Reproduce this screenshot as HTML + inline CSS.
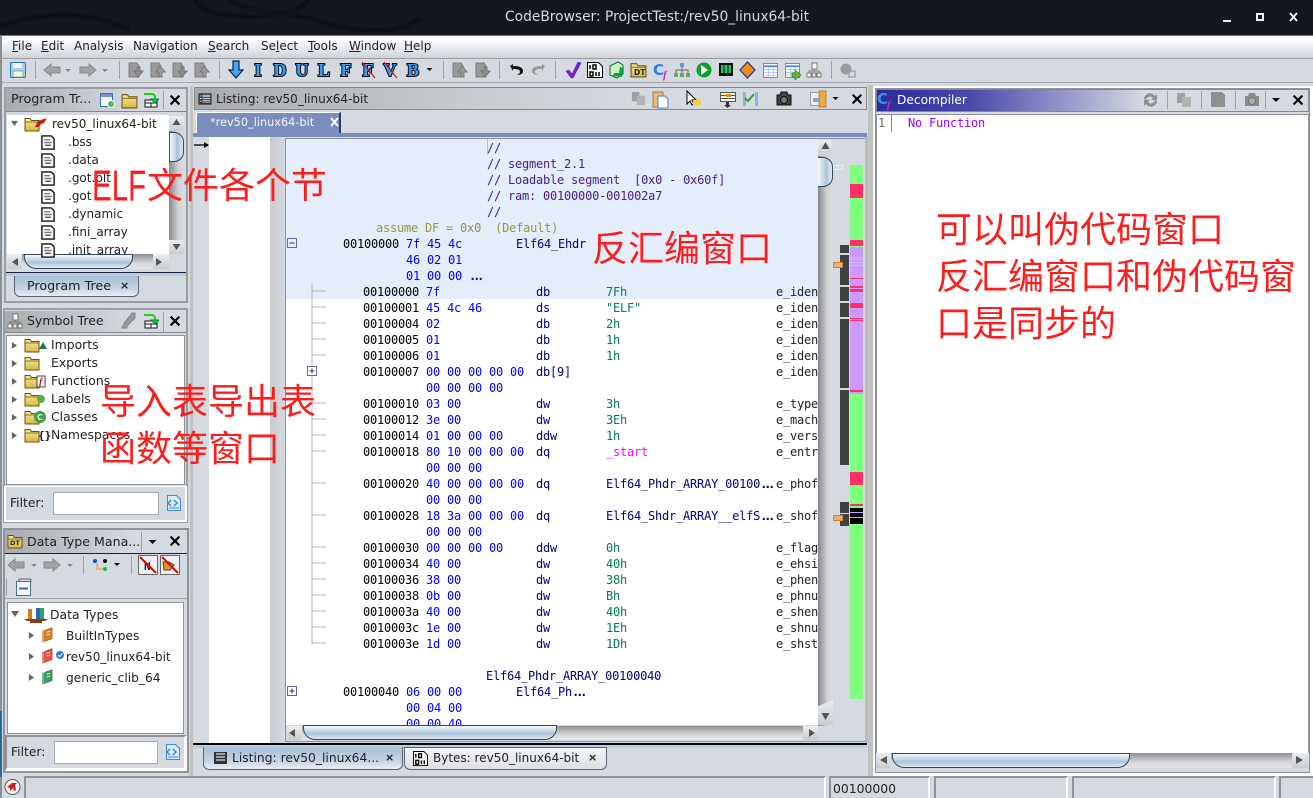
<!DOCTYPE html>
<html><head><meta charset="utf-8"><style>
html,body{margin:0;padding:0;width:1313px;height:798px;overflow:hidden;background:#d5d9e0}
body{position:relative;font-family:"DejaVu Sans","Liberation Sans",sans-serif;font-size:12px;color:#222}
.a{position:absolute;box-sizing:border-box}
.t{position:absolute;white-space:pre;line-height:16px;height:16px;margin-top:2px}
.w{background:#fff}
.box{position:absolute;box-sizing:border-box;border:2px solid #9a9da3}
.sep{position:absolute;width:1px;background:#9da0a6}
u{text-decoration:underline}
.note{position:absolute;white-space:pre;font-family:"Liberation Sans","Noto Sans CJK SC",sans-serif;font-size:36px;line-height:46px;height:46px;color:#ff1c1c;z-index:20}
#L{position:absolute;left:286px;top:139px;width:532px;height:586px;overflow:hidden;background:#fff;font-family:"DejaVu Sans Mono","Liberation Mono",monospace;font-size:12px;letter-spacing:-.22px;color:#000}
#L div{position:absolute;left:0;width:532px;height:16px;line-height:16px;white-space:pre}
#L span{position:absolute;top:1px}
#L b{letter-spacing:-3.2px}
.ad{left:57px}.ad2{left:77px}
.b1{left:120px;color:#0000ff}.b2{left:140px;color:#0000ff}
.m1{left:230px;color:#000080}.m2{left:250px;color:#000080}
.o{left:320px;color:#00804a}.ol{left:320px;color:#000080}
.c{left:490px;color:#222}
.cm{left:201px;color:#4b1a8c}
.thumb{position:absolute;box-sizing:border-box;border:1px solid #33495e;background:linear-gradient(#f4f8fb,#bcd2e2 45%,#a9c3d8 55%,#dfeaf2)}
.vthumb{position:absolute;box-sizing:border-box;border:1px solid #33495e;background:linear-gradient(90deg,#f4f8fb,#bcd2e2 45%,#a9c3d8 55%,#dfeaf2)}
.track{position:absolute;background:linear-gradient(#8d8f93,#d5d6d8 60%,#e4e5e7)}
.vtrack{position:absolute;background:linear-gradient(90deg,#85878b,#d0d1d3 60%,#dcdde0)}
.btn{position:absolute;background:linear-gradient(#eceef0,#c9ccd0);text-align:center}
.tab{position:absolute;box-sizing:border-box;border:1px solid #5a6470;border-top:0;border-radius:0 0 6px 6px}
.ltr{position:absolute;font:bold 18px/17px "Liberation Serif",serif;color:#3b9bf0;-webkit-text-stroke:2px #0a0a14;paint-order:stroke fill;width:18px;text-align:center}
.elf{display:inline-block;width:55px;transform-origin:0 50%;transform:scale(.82,1.2)}
svg{position:absolute;left:0;top:0;overflow:visible}
</style></head><body>

<!-- title bar -->
<div class="a" style="left:0;top:0;width:1313px;height:36px;background:#15171e;border-bottom:1px solid #3b82c8"></div>
<svg width="1313" height="36" style="z-index:1"><g fill="none" stroke="#101118" stroke-width="5"><path d="M195 0C205 22 290 22 310 0M230 0C250 14 300 12 330 24 370 36 410 30 420 18"/><path d="M0 26C40 12 90 10 130 30"/></g></svg>
<div class="t" style="left:505px;top:7px;z-index:2;color:#d8d9db;font-size:13.8px;font-weight:500">CodeBrowser: ProjectTest:/rev50_linux64-bit</div>
<div class="a" style="left:1223px;top:20px;width:8px;height:2px;background:#eee;z-index:2"></div>
<div class="a" style="left:1256px;top:13px;width:8px;height:8px;border:2px solid #eee;z-index:2"></div>
<svg width="1313" height="36" style="z-index:2"><path d="M1290 13l7 8M1297 13l-7 8" stroke="#eee" stroke-width="2"/></svg>

<!-- menu -->
<div class="a" style="left:2px;top:36px;width:1311px;height:23px;background:linear-gradient(#fff 15%,#eceef1 45%,#cfd2d8);border-bottom:1px solid #9a9da3"></div>
<div class="t" style="left:12px;top:36px"><u>F</u>ile</div>
<div class="t" style="left:41px;top:36px"><u>E</u>dit</div>
<div class="t" style="left:74px;top:36px">Analysis</div>
<div class="t" style="left:133px;top:36px">Navigation</div>
<div class="t" style="left:208px;top:36px"><u>S</u>earch</div>
<div class="t" style="left:261px;top:36px">Se<u>l</u>ect</div>
<div class="t" style="left:308px;top:36px"><u>T</u>ools</div>
<div class="t" style="left:349px;top:36px"><u>W</u>indow</div>
<div class="t" style="left:404px;top:36px"><u>H</u>elp</div>

<!-- toolbar separator lines -->
<div class="a" style="left:0;top:82px;width:1313px;height:1px;background:#a5a8ae"></div>
<div class="sep" style="left:35px;top:61px;height:18px"></div>
<div class="sep" style="left:119px;top:61px;height:18px"></div>
<div class="sep" style="left:219px;top:61px;height:18px"></div>
<div class="sep" style="left:443px;top:61px;height:18px"></div>
<div class="sep" style="left:499px;top:61px;height:18px"></div>
<div class="sep" style="left:555px;top:61px;height:18px"></div>
<div class="sep" style="left:831px;top:61px;height:18px"></div>

<div class="ltr" style="left:249px;top:62px">I</div>
<div class="ltr" style="left:271px;top:62px">D</div>
<div class="ltr" style="left:293px;top:62px">U</div>
<div class="ltr" style="left:315px;top:62px">L</div>
<div class="ltr" style="left:337px;top:62px">F</div>
<div class="ltr" style="left:359px;top:62px">F</div>
<div class="ltr" style="left:381px;top:62px">V</div>
<div class="ltr" style="left:404px;top:62px">B</div>

<!-- program tree panel -->
<div class="box" style="left:4px;top:87px;width:184px;height:216px"></div>
<div class="a" style="left:6px;top:89px;width:180px;height:23px;background:linear-gradient(90deg,#a9abae,#d5d9e0 70%);border-bottom:1px solid #888"></div>
<div class="t" style="left:11px;top:90px;font-size:12.8px">Program Tr...</div>
<div class="sep" style="left:163px;top:91px;height:18px"></div>
<div class="a w" style="left:7px;top:115px;width:162px;height:139px;overflow:hidden" id="pt">
<div class="t" style="left:45px;top:-1px">rev50_linux64-bit</div>
<div class="t" style="left:61px;top:17px">.bss</div>
<div class="t" style="left:61px;top:35px">.data</div>
<div class="t" style="left:61px;top:53px">.got.plt</div>
<div class="t" style="left:61px;top:71px">.got</div>
<div class="t" style="left:61px;top:89px">.dynamic</div>
<div class="t" style="left:61px;top:107px">.fini_array</div>
<div class="t" style="left:61px;top:125px">.init_array</div>
</div>
<div class="a" style="left:169px;top:116px;width:15px;height:138px;background:#d5d9e0"></div>
<div class="vtrack" style="left:169px;top:131px;width:15px;height:109px"></div>
<div class="btn" style="left:169px;top:116px;width:15px;height:15px"></div>
<div class="btn" style="left:169px;top:240px;width:15px;height:14px"></div>
<div class="vthumb" style="left:169px;top:132px;width:15px;height:30px;border-radius:0 10px 10px 0"></div>
<div class="track" style="left:7px;top:254px;width:162px;height:15px"></div>
<div class="btn" style="left:7px;top:254px;width:15px;height:15px"></div>
<div class="btn" style="left:153px;top:254px;width:16px;height:15px"></div>
<div class="thumb" style="left:24px;top:254px;width:109px;height:15px;border-radius:0 0 12px 12px"></div>
<div class="a" style="left:6px;top:272px;width:180px;height:1px;background:#1a1f3c"></div>
<div class="a" style="left:6px;top:273px;width:180px;height:3px;background:#b9cde0"></div>
<div class="tab" style="left:14px;top:276px;width:125px;height:21px;background:linear-gradient(#a9c0d6,#c2d2e0 60%,#e8eef3)"></div>
<div class="t" style="left:27px;top:276px;font-size:12.7px">Program Tree</div>
<div class="t" style="left:120px;top:276px;font-size:11px;font-weight:bold">×</div>

<!-- symbol tree -->
<div class="box" style="left:3px;top:308px;width:185px;height:215px"></div>
<div class="a" style="left:5px;top:311px;width:181px;height:22px;background:linear-gradient(90deg,#a9abae,#d5d9e0 70%);border-bottom:1px solid #888"></div>
<div class="t" style="left:27px;top:311px;font-size:12.5px">Symbol Tree</div>
<div class="sep" style="left:163px;top:312px;height:20px"></div>
<div class="a w" style="left:6px;top:335px;width:179px;height:150px;border:1px solid #8f9298"></div>
<div class="t" style="left:51px;top:335px;font-size:12.4px">Imports</div>
<div class="t" style="left:51px;top:353px;font-size:12.4px">Exports</div>
<div class="t" style="left:51px;top:371px;font-size:12.4px">Functions</div>
<div class="t" style="left:51px;top:389px;font-size:12.4px">Labels</div>
<div class="t" style="left:51px;top:407px;font-size:12.4px">Classes</div>
<div class="t" style="left:51px;top:425px;font-size:12.4px">Namespaces</div>
<div class="a" style="left:4px;top:486px;width:183px;height:36px;border:2px solid #fff;border-top:1px solid #fff;background:#d5d9e0"></div>
<div class="t" style="left:10px;top:493px;font-size:12.3px">Filter:</div>
<div class="a w" style="left:53px;top:492px;width:106px;height:23px;border:1px solid #a8abb0"></div>

<!-- data type manager -->
<div class="box" style="left:3px;top:528px;width:186px;height:245px;border-color:#8f9298"></div>
<div class="a" style="left:5px;top:530px;width:182px;height:24px;background:linear-gradient(90deg,#a9abae,#d5d9e0 70%);border-bottom:1px solid #222"></div>
<div class="t" style="left:27px;top:532px;font-size:12.6px">Data Type Mana...</div>
<div class="sep" style="left:141px;top:532px;height:20px"></div>
<div class="sep" style="left:83px;top:556px;height:18px"></div>
<div class="sep" style="left:131px;top:556px;height:18px"></div>
<div class="sep" style="left:6px;top:578px;height:18px"></div>
<div class="a" style="left:5px;top:598px;width:182px;height:1px;background:#a5a8ae"></div>
<div class="a w" style="left:7px;top:602px;width:177px;height:132px;border:1px solid #8f9298"></div>
<div class="t" style="left:50px;top:605px;font-size:12.4px">Data Types</div>
<div class="t" style="left:66px;top:626px;font-size:12.2px">BuiltInTypes</div>
<div class="t" style="left:66px;top:647px">rev50_linux64-bit</div>
<div class="t" style="left:66px;top:668px;font-size:12.2px">generic_clib_64</div>
<div class="a" style="left:5px;top:735px;width:182px;height:36px;border:2px solid #8f9298;border-bottom:3px solid #fff;border-right:3px solid #fff;background:#d5d9e0"></div>
<div class="t" style="left:11px;top:742px;font-size:12.3px">Filter:</div>
<div class="a w" style="left:54px;top:741px;width:104px;height:23px;border:1px solid #a8abb0"></div>

<!-- splitter -->
<div class="a" style="left:190px;top:86px;width:3px;height:692px;background:#c1c2c0"></div>
<div class="a" style="left:279px;top:430px;width:4px;height:18px;background:#b5b8bd;border:1px solid #999"></div>

<!-- listing panel -->
<div class="a" style="left:194px;top:87px;width:673px;height:23px;background:linear-gradient(90deg,#a8aaae,#c8cace 40%,#d5d9e0 65%);border:1px solid #888"></div>
<div class="t" style="left:216px;top:89px">Listing: rev50_linux64-bit</div>
<div class="a" style="left:196px;top:112px;width:145px;height:22px;background:#7a8dbd;border-top:1px solid #fff;border-right:2px solid #2c3a66;border-left:1px solid #fff"></div>
<div class="t" style="left:210px;top:113px;color:#f4f6fb;font-size:11.3px">*rev50_linux64-bit</div>
<div class="a" style="left:193px;top:133px;width:674px;height:4px;background:#7a8dbd"></div>
<div class="a" style="left:193px;top:137px;width:16px;height:606px;background:#d5d9e0"></div>
<div class="a w" style="left:209px;top:137px;width:61px;height:606px"></div>
<div class="a" style="left:270px;top:137px;width:15px;height:606px;background:linear-gradient(90deg,#c8cacc,#d5d9e0)"></div>
<div class="a" style="left:285px;top:138px;width:582px;height:604px;border:1px solid #8f9298"></div>

<div id="L">
<div style="top:0;height:160px;background:#e4eefb"></div>
<div style="top:0"><span class="cm">//</span></div>
<div style="top:16px"><span class="cm">// segment_2.1</span></div>
<div style="top:32px"><span class="cm">// Loadable segment  [0x0 - 0x60f]</span></div>
<div style="top:48px"><span class="cm">// ram: 00100000-001002a7</span></div>
<div style="top:64px"><span class="cm">//</span></div>
<div style="top:80px"><span style="left:90px;color:#9a9440">assume DF = 0x0  (Default)</span></div>
<div style="top:96px"><span class="ad">00100000</span><span class="b1">7f 45 4c</span><span class="m1">Elf64_Ehdr</span></div>
<div style="top:112px"><span class="b1">46 02 01</span></div>
<div style="top:128px"><span class="b1">01 00 00 <b>...</b></span></div>
<div style="top:144px"><span class="ad2">00100000</span><span class="b2">7f</span><span class="m2">db</span><span class="o">7Fh</span><span class="c">e_iden</span></div>
<div style="top:160px"><span class="ad2">00100001</span><span class="b2">45 4c 46</span><span class="m2">ds</span><span class="o">"ELF"</span><span class="c">e_iden</span></div>
<div style="top:176px"><span class="ad2">00100004</span><span class="b2">02</span><span class="m2">db</span><span class="o">2h</span><span class="c">e_iden</span></div>
<div style="top:192px"><span class="ad2">00100005</span><span class="b2">01</span><span class="m2">db</span><span class="o">1h</span><span class="c">e_iden</span></div>
<div style="top:208px"><span class="ad2">00100006</span><span class="b2">01</span><span class="m2">db</span><span class="o">1h</span><span class="c">e_iden</span></div>
<div style="top:224px"><span class="ad2">00100007</span><span class="b2">00 00 00 00 00</span><span class="m2">db[9]</span><span class="c">e_iden</span></div>
<div style="top:240px"><span class="b2">00 00 00 00</span></div>
<div style="top:256px"><span class="ad2">00100010</span><span class="b2">03 00</span><span class="m2">dw</span><span class="o">3h</span><span class="c">e_type</span></div>
<div style="top:272px"><span class="ad2">00100012</span><span class="b2">3e 00</span><span class="m2">dw</span><span class="o">3Eh</span><span class="c">e_mach</span></div>
<div style="top:288px"><span class="ad2">00100014</span><span class="b2">01 00 00 00</span><span class="m2">ddw</span><span class="o">1h</span><span class="c">e_vers</span></div>
<div style="top:304px"><span class="ad2">00100018</span><span class="b2">80 10 00 00 00</span><span class="m2">dq</span><span class="ol" style="color:#ff00ff">_start</span><span class="c">e_entr</span></div>
<div style="top:320px"><span class="b2">00 00 00</span></div>
<div style="top:336px"><span class="ad2">00100020</span><span class="b2">40 00 00 00 00</span><span class="m2">dq</span><span class="ol">Elf64_Phdr_ARRAY_00100<b>...</b></span><span class="c">e_phof</span></div>
<div style="top:352px"><span class="b2">00 00 00</span></div>
<div style="top:368px"><span class="ad2">00100028</span><span class="b2">18 3a 00 00 00</span><span class="m2">dq</span><span class="ol">Elf64_Shdr_ARRAY__elfS<b>...</b></span><span class="c">e_shof</span></div>
<div style="top:384px"><span class="b2">00 00 00</span></div>
<div style="top:400px"><span class="ad2">00100030</span><span class="b2">00 00 00 00</span><span class="m2">ddw</span><span class="o">0h</span><span class="c">e_flag</span></div>
<div style="top:416px"><span class="ad2">00100034</span><span class="b2">40 00</span><span class="m2">dw</span><span class="o">40h</span><span class="c">e_ehsi</span></div>
<div style="top:432px"><span class="ad2">00100036</span><span class="b2">38 00</span><span class="m2">dw</span><span class="o">38h</span><span class="c">e_phen</span></div>
<div style="top:448px"><span class="ad2">00100038</span><span class="b2">0b 00</span><span class="m2">dw</span><span class="o">Bh</span><span class="c">e_phnu</span></div>
<div style="top:464px"><span class="ad2">0010003a</span><span class="b2">40 00</span><span class="m2">dw</span><span class="o">40h</span><span class="c">e_shen</span></div>
<div style="top:480px"><span class="ad2">0010003c</span><span class="b2">1e 00</span><span class="m2">dw</span><span class="o">1Eh</span><span class="c">e_shnu</span></div>
<div style="top:496px"><span class="ad2">0010003e</span><span class="b2">1d 00</span><span class="m2">dw</span><span class="o">1Dh</span><span class="c">e_shst</span></div>
<div style="top:528px"><span style="left:200px;color:#000080">Elf64_Phdr_ARRAY_00100040</span></div>
<div style="top:544px"><span class="ad">00100040</span><span class="b1">06 00 00</span><span class="m1">Elf64_Ph<b>...</b></span></div>
<div style="top:560px"><span class="b1">00 04 00</span></div>
<div style="top:576px"><span class="b1">00 00 40</span></div>
</div>

<!-- listing v scrollbar -->
<div class="vtrack" style="left:818px;top:140px;width:15px;height:586px"></div>
<div class="btn" style="left:818px;top:140px;width:14px;height:16px"></div>
<div class="vthumb" style="left:818px;top:157px;width:15px;height:30px;border-radius:0 10px 10px 0;border-left:0"></div>
<div class="btn" style="left:818px;top:700px;width:15px;height:25px;clip-path:polygon(0 25%,100% 0,100% 100%,0 100%)"></div>
<div class="a" style="left:833px;top:165px;width:10px;height:1px;background:#fff"></div>
<div class="a" style="left:833px;top:165px;width:10px;height:5px;border:1px solid #eef0f3"></div>

<!-- overview bars -->
<div class="a" style="left:840px;top:245px;width:9px;height:8px;background:#404040"></div>
<div class="a" style="left:840px;top:255px;width:9px;height:30px;background:#404040"></div>
<div class="a" style="left:840px;top:287px;width:9px;height:14px;background:#404040"></div>
<div class="a" style="left:840px;top:303px;width:9px;height:14px;background:#404040"></div>
<div class="a" style="left:840px;top:319px;width:9px;height:69px;background:#404040"></div>
<div class="a" style="left:840px;top:390px;width:9px;height:75px;background:#404040"></div>
<div class="a" style="left:840px;top:502px;width:9px;height:11px;background:#404040"></div>
<div class="a" style="left:840px;top:514px;width:9px;height:12px;background:#404040"></div>
<div class="a" style="left:833px;top:262px;width:10px;height:6px;background:#d8b48a;border:1px solid #f07f10"></div>
<div class="a" style="left:833px;top:515px;width:10px;height:6px;background:#d8b48a;border:1px solid #f07f10"></div>
<div class="a" style="left:850px;top:165px;width:13px;height:534px;background:#80ff80"></div>
<div class="a" style="left:850px;top:184px;width:13px;height:14px;background:#ff3068"></div>
<div class="a" style="left:850px;top:240px;width:13px;height:6px;background:#ff3068"></div>
<div class="a" style="left:850px;top:247px;width:13px;height:147px;background:#cc99ff"></div>
<div class="a" style="left:850px;top:257px;width:13px;height:1px;background:#c4c0ff"></div>
<div class="a" style="left:850px;top:259px;width:13px;height:1px;background:#c4c0ff"></div>
<div class="a" style="left:850px;top:262px;width:13px;height:1px;background:#c4c0ff"></div>
<div class="a" style="left:850px;top:265px;width:13px;height:1px;background:#c4c0ff"></div>
<div class="a" style="left:850px;top:278px;width:13px;height:1px;background:#ff3068"></div>
<div class="a" style="left:850px;top:286px;width:13px;height:2px;background:#ff3068"></div>
<div class="a" style="left:850px;top:289px;width:13px;height:3px;background:#ff3068"></div>
<div class="a" style="left:850px;top:303px;width:13px;height:5px;background:#ff3068"></div>
<div class="a" style="left:850px;top:318px;width:13px;height:1px;background:#ff3068"></div>
<div class="a" style="left:850px;top:320px;width:13px;height:1px;background:#ff3068"></div>
<div class="a" style="left:850px;top:390px;width:13px;height:2px;background:#ff3068"></div>
<div class="a" style="left:850px;top:472px;width:13px;height:13px;background:#ff3068"></div>
<div class="a" style="left:850px;top:504px;width:13px;height:2px;background:#ff3068"></div>
<div class="a" style="left:850px;top:508px;width:13px;height:16px;background:#000"></div>
<div class="a" style="left:850px;top:512px;width:13px;height:1px;background:#cc99ff"></div>
<div class="a" style="left:850px;top:517px;width:13px;height:1px;background:#cc99ff"></div>
<div class="a" style="left:865px;top:137px;width:3px;height:606px;background:#b9babd"></div>

<!-- listing h scrollbar -->
<div class="track" style="left:287px;top:726px;width:530px;height:14px"></div>
<div class="btn" style="left:287px;top:726px;width:15px;height:14px"></div>
<div class="btn" style="left:803px;top:726px;width:15px;height:14px"></div>
<div class="thumb" style="left:303px;top:725px;width:254px;height:15px;border-radius:0 0 12px 12px"></div>

<!-- lower tabs -->
<div class="a" style="left:193px;top:743px;width:674px;height:2px;background:#05060f"></div>
<div class="a" style="left:193px;top:745px;width:674px;height:3px;background:#b9cde0"></div>
<div class="tab" style="left:203px;top:747px;width:200px;height:23px;background:linear-gradient(#a9c0d6,#c2d2e0 60%,#e8eef3)"></div>
<div class="tab" style="left:404px;top:747px;width:203px;height:23px;background:linear-gradient(#f3f4f6,#dde0e4);border-top:1px solid #5a6470"></div>
<div class="t" style="left:232px;top:748px;font-size:12.3px">Listing: rev50_linux64...</div>
<div class="t" style="left:385px;top:748px;font-size:11px;font-weight:bold">×</div>
<div class="t" style="left:433px;top:748px">Bytes: rev50_linux64-bit</div>
<div class="t" style="left:588px;top:748px;font-size:11px;font-weight:bold">×</div>

<!-- decompiler -->
<div class="a" style="left:868px;top:85px;width:5px;height:692px;background:#c1c2c0"></div>
<div class="a" style="left:873px;top:86px;width:440px;height:690px;background:#fff"></div>
<div class="a" style="left:875px;top:88px;width:435px;height:685px;border:1px solid #8f9298;background:#d5d9e0"></div>
<div class="a" style="left:876px;top:89px;width:433px;height:23px;background:linear-gradient(90deg,#2a2a9c,#4a4caa 22%,#9a9ccc 45%,#d5d9e0 62%);border:1px solid #888"></div>
<div class="t" style="left:897px;top:90px;color:#fff;font-size:12.2px">Decompiler</div>
<div class="sep" style="left:1167px;top:91px;height:18px"></div>
<div class="sep" style="left:1201px;top:91px;height:18px"></div>
<div class="sep" style="left:1235px;top:91px;height:18px"></div>
<div class="sep" style="left:1265px;top:91px;height:18px"></div>
<div class="a w" style="left:876px;top:114px;width:433px;height:639px;border:1px solid #8f9298;border-bottom:0"></div>
<div class="a" style="left:891px;top:115px;width:1px;height:17px;background:#888"></div>
<div style="position:absolute;left:878px;top:115px;font:12px/16px 'DejaVu Sans Mono',monospace;letter-spacing:-.22px;color:#666">1</div>
<div style="position:absolute;left:908px;top:115px;font:12px/16px 'DejaVu Sans Mono',monospace;letter-spacing:-.22px;color:#a000ff">No Function</div>
<div class="track" style="left:876px;top:753px;width:433px;height:15px"></div>
<div class="btn" style="left:876px;top:753px;width:15px;height:15px"></div>
<div class="btn" style="left:1292px;top:753px;width:17px;height:15px"></div>
<div class="thumb" style="left:892px;top:753px;width:238px;height:15px;border-radius:0 0 12px 12px"></div>

<!-- status bar -->
<div class="a" style="left:0;top:776px;width:1313px;height:22px;background:#d5d9e0"></div>
<div class="a" style="left:24px;top:776px;width:802px;height:24px;border:2px solid #8f9298;border-right-color:#fff;border-bottom:0"></div>
<div class="a" style="left:829px;top:776px;width:101px;height:24px;border:2px solid #8f9298;border-right-color:#fff;border-bottom:0"></div>
<div class="a" style="left:934px;top:776px;width:134px;height:24px;border:2px solid #8f9298;border-right-color:#fff;border-bottom:0"></div>
<div class="a" style="left:1072px;top:776px;width:204px;height:24px;border:2px solid #8f9298;border-right-color:#fff;border-bottom:0"></div>
<div class="a" style="left:1279px;top:776px;width:40px;height:24px;border:2px solid #8f9298;border-bottom:0"></div>
<div class="t" style="left:833px;top:779px;font-size:12.4px">00100000</div>
<div class="a" style="left:0;top:36px;width:2px;height:762px;background:#8a8f96"></div>
<div class="a" style="left:0;top:711px;width:2px;height:66px;background:#2c6a90"></div>

<!-- icons -->
<svg width="1313" height="798" viewBox="0 0 1313 798" style="z-index:10">
<defs>
<linearGradient id="gold" x1="0" y1="0" x2="0" y2="1"><stop offset="0" stop-color="#f6ea9a"/><stop offset="1" stop-color="#d8b848"/></linearGradient>
<symbol id="folder" viewBox="0 0 16 16"><path d="M1 2.500h5l1.500 2h7.500v10.500H1z" fill="url(#gold)" stroke="#6a5510" stroke-width="1"/><path d="M1.500 6h13" stroke="#8a7420"/></symbol>
<symbol id="fdoc" viewBox="0 0 16 16"><path d="M1.500 1h10l3 3v11h-13z" fill="#fff" stroke="#111" stroke-width="1.500"/><path d="M4 5h6M4 8h8" stroke="#777" stroke-width="1.500"/><path d="M5 11h6" stroke="#933" stroke-width="1.500"/></symbol>
<symbol id="gdoc" viewBox="0 0 16 16"><path d="M1 1h8l2 3v11H1z" fill="#9a9a9a" stroke="#7d7d7d"/><path d="M9 5h3v4h3l-5 6-4-6h3z" fill="#8d8d8d" stroke="#777"/></symbol>
<symbol id="gdocu" viewBox="0 0 16 16"><path d="M1 1h8l2 3v11H1z" fill="#9a9a9a" stroke="#7d7d7d"/><path d="M9 15h3v-5h3l-5-6-4 6h3z" fill="#9d9d9d" stroke="#777"/></symbol>
<symbol id="x" viewBox="0 0 16 16"><path d="M3 3l10 10M13 3L3 13" stroke="#000" stroke-width="2.400"/></symbol>
<symbol id="tri" viewBox="0 0 8 8"><path d="M1 0l6 4-6 4z" fill="#666"/></symbol>
<symbol id="trid" viewBox="0 0 8 8"><path d="M0 1h8L4 7z" fill="#666"/></symbol>
<symbol id="dd" viewBox="0 0 8 4"><path d="M0 0h8L4 4z" fill="#111"/></symbol>
<symbol id="ddg" viewBox="0 0 8 4"><path d="M0 0h8L4 4z" fill="#888"/></symbol>
<symbol id="cam" viewBox="0 0 16 16"><path d="M1 5h3l1-3h6l1 3h3v10H1z" fill="#444" stroke="#111"/><circle cx="8" cy="10" r="3.500" fill="#777" stroke="#111"/></symbol>
<symbol id="gcam" viewBox="0 0 16 16"><path d="M1 5h3l1-3h6l1 3h3v10H1z" fill="#8b8b8b"/><circle cx="8" cy="10" r="3.500" fill="#aaa" stroke="#777"/></symbol>
<symbol id="copy" viewBox="0 0 16 16"><path d="M1 1h8v10H1z" fill="#a0a0a0"/><path d="M6 5h9v10H6z" fill="#b3b3b3"/></symbol>
<symbol id="plist" viewBox="0 0 16 16"><rect x=".5" y="1.500" width="15" height="13" fill="#333"/><path d="M2 4h2v1H2zM2 7h2v1H2zM2 10h2v1H2z" fill="#fff"/><path d="M5 3h9v3H5z" fill="#8fb4d8"/><path d="M5 7h9v1H5zM5 9h9v1H5zM5 11h9v1H5z" fill="#e8e8e8"/></symbol>
<symbol id="bin" viewBox="0 0 16 16"><path d="M.5 .5h11l4 4v11H.5z" fill="#fff" stroke="#000"/><path d="M3 3v4M12 10v4M6 3h3v4H6zM3 10h3v4H3z" fill="none" stroke="#000" stroke-width="1.500"/><path d="M9 10v4" stroke="#000" stroke-width="1.500"/></symbol>
<symbol id="filt" viewBox="0 0 16 16"><path d="M1.500 .5h9l4 4v11h-13z" fill="#dbeaff" stroke="#3d88d8"/><path d="M5 5L2 8l3 3M8 5l3 3-3 3" stroke="#3d88d8" fill="none" stroke-width="1.500"/><path d="M3 13h10" stroke="#3d88d8"/></symbol>
<symbol id="recv" viewBox="0 0 16 16"><path d="M2 8h12v7H2z" fill="#fff" stroke="#111"/><path d="M2 11h12M8 11v4" stroke="#111"/><path d="M1 2h8q3 0 3 4v2" fill="none" stroke="#1cd11c" stroke-width="2"/><path d="M8 7h8l-4 4z" fill="#1cd11c" stroke="#085"/></symbol>
<symbol id="book" viewBox="0 0 12 16"><path d="M3 3l8-3v12l-8 3z" fill="currentColor" stroke="#333" stroke-width=".5"/><path d="M0 3l3 0v13H0z" fill="currentColor" opacity=".7"/><path d="M5 5l4-1M5 8l4-1" stroke="#ffe27a"/></symbol>
<symbol id="tbl" viewBox="0 0 16 16"><rect x=".5" y=".5" width="15" height="15" fill="#fff" stroke="#4a8fd8"/><path d="M1 3.500h14" stroke="#4a8fd8" stroke-width="2"/><path d="M1 7h14M1 10h14M1 13h14M6 5v10M11 5v10" stroke="#a8c8ec"/></symbol>
<symbol id="orgt" viewBox="0 0 16 16"><rect x="6" y="1" width="5" height="6" fill="#fff" stroke="#777"/><path d="M8 7v2M3 11V9h10v2" stroke="#777" fill="none"/><rect x="1" y="11" width="4" height="4" fill="#fff" stroke="#777"/><rect x="6" y="11" width="4" height="4" fill="#ffd7d7" stroke="#777"/><rect x="11" y="11" width="4" height="4" fill="#d8f5d0" stroke="#777"/></symbol>
</defs>

<!-- main toolbar -->
<rect x="10.500" y="62.500" width="15" height="15" rx="1" fill="#a9cff5" stroke="#2d71c0"/><rect x="13" y="63" width="9" height="5" fill="#eef5fd"/><rect x="13" y="71" width="10" height="6" fill="#f4f4e4" stroke="#69a06c" stroke-width=".7"/>
<path d="M44 70l7-6v3h9v6h-9v3z" fill="#a2a2a2" stroke="#8a8a8a"/><use href="#ddg" x="65" y="69" width="6" height="3"/>
<path d="M96 70l-7-6v3h-9v6h9v3z" fill="#a2a2a2" stroke="#8a8a8a"/><use href="#ddg" x="102" y="69" width="6" height="3"/>
<use href="#gdoc" x="128" y="62" width="16" height="16"/><use href="#gdocu" x="150" y="62" width="16" height="16"/><use href="#gdoc" x="172" y="62" width="16" height="16"/><use href="#gdocu" x="194" y="62" width="16" height="16"/>
<path d="M233 61h6v9h4l-7 8-7-8h4z" fill="#3ea6f5" stroke="#10253f" stroke-width="1.200"/>
<path d="M362 62l13 16M384 62l13 16" stroke="#d02020" stroke-width="1.300"/>
<use href="#dd" x="426" y="68" width="7" height="3"/>
<use href="#gdocu" x="452" y="62" width="16" height="16"/><use href="#gdoc" x="475" y="62" width="16" height="16"/>
<path d="M510 66l3-2v2c4 0 10 .5 10 5 0 3-3 4-6 4 2-1 3-2 3-3 0-3-4-3-7-3v2z" fill="#111"/>
<path d="M545 66l-3-2v2c-4 0-10 .5-10 5 0 3 3 4 6 4-2-1-3-2-3-3 0-3 4-3 7-3v2z" fill="#9a9a9a"/>
<path d="M566 71l3-1 3 4 6-12 3 1-8 15h-2z" fill="#7a1fd8" stroke="#5a10b0" stroke-width=".5"/>
<use href="#bin" x="587" y="62" width="16" height="16"/>
<path d="M610 66l8-4 5 3v9l-6 4-7-3z" fill="#c6f5c0" stroke="#0c6b2c"/><path d="M613 64l6 9 1-6 3 1-1 9-9-1 1-3 5 0z" fill="#0fa04a"/>
<use href="#folder" x="630" y="61" width="17" height="17"/><text x="634" y="75" font-family="DejaVu Sans" font-size="7.500" font-weight="bold" fill="#222">DT</text>
<text x="653" y="75" font-family="DejaVu Sans" font-weight="bold" font-size="15" fill="#2c7df0">C</text><text x="663" y="78" font-family="Liberation Serif" font-style="italic" font-weight="bold" font-size="11" fill="#e01cc0">f</text>
<g fill="#6fa45f"><rect x="674" y="73" width="4" height="4"/><rect x="680" y="73" width="4" height="4"/><rect x="686" y="73" width="4" height="4"/></g><rect x="680" y="63" width="4" height="4" fill="#6d97d8"/><path d="M682 67v3M676 73v-3h12v3M682 70v3" stroke="#666" fill="none"/>
<circle cx="704" cy="70" r="7.500" fill="#0da02c"/><path d="M701 65v10l7-5z" fill="#fff"/>
<rect x="719" y="63" width="14" height="13" fill="#111"/><rect x="721" y="65" width="10" height="8" fill="#22c45a"/><path d="M724 65v8M728 65v8" stroke="#111"/>
<path d="M747.500 62l7.500 8-7.500 8-7.500-8z" fill="#f58a16" stroke="#1c2fa0" stroke-width="1.200"/>
<use href="#tbl" x="763" y="63" width="15" height="15"/><use href="#tbl" x="785" y="63" width="15" height="15"/><path d="M792 73h3v-3l6 5-6 5v-3h-3z" fill="#6fb53c" stroke="#3a7c24" stroke-width=".7"/>
<use href="#orgt" x="806" y="62" width="16" height="16"/>
<circle cx="846" cy="69" r="5.500" fill="#9c9c9c"/><path d="M851 71h4v6h-6v-3" fill="none" stroke="#9c9c9c" stroke-width="1.300"/>

<!-- program tree icons -->
<rect x="100.500" y="93.500" width="12" height="13" fill="#f4f6fa" stroke="#3e70b0"/><rect x="101" y="94" width="11" height="3" fill="#6d98cf"/><circle cx="111" cy="104" r="3.500" fill="#5cb85c" stroke="#fff"/>
<use href="#folder" x="121" y="92" width="17" height="17"/>
<use href="#recv" x="143" y="92" width="16" height="16"/><use href="#x" x="168" y="93" width="14" height="14"/>
<use href="#trid" x="11" y="120" width="7" height="7"/>
<use href="#folder" x="24" y="116" width="16" height="16"/><path d="M35 127l3-6 9-3-3 5-3 1-2 3z" fill="#c41a1a"/>
<use href="#fdoc" x="40" y="135" width="16" height="15"/><use href="#fdoc" x="40" y="153" width="16" height="15"/><use href="#fdoc" x="40" y="171" width="16" height="15"/><use href="#fdoc" x="40" y="189" width="16" height="15"/><use href="#fdoc" x="40" y="207" width="16" height="15"/><use href="#fdoc" x="40" y="225" width="16" height="15"/>
<svg x="40" y="243" width="16" height="11"><use href="#fdoc" width="16" height="15"/></svg>
<path d="M176.500 119l4 6h-8zM176.500 250l4-6h-8z" fill="#555"/>
<path d="M12 262l6-4v8zM162 262l-6-4v8z" fill="#555"/>

<!-- listing icons -->
<use href="#plist" x="198" y="92" width="14" height="14"/>
<use href="#copy" x="631" y="91" width="15" height="15"/>
<path d="M653 92h10v15h-10z" fill="#e4b97c" stroke="#a87a40"/><path d="M658 96h7l3 3v9h-10z" fill="#fff" stroke="#4e82c8"/>
<path d="M687 91v13l3-3 2 4 2-1-2-4h4z" fill="#fff" stroke="#000"/><rect x="693" y="100" width="8" height="5" fill="#f5d040"/>
<rect x="720.500" y="92.500" width="15" height="9" fill="#fff" stroke="#555"/><path d="M721 95.500h14M721 98.500h14" stroke="#555"/><rect x="726" y="94" width="5" height="3" fill="#f08a20"/><path d="M726 102h3v3h2l-3.500 3-3.500-3h2z" fill="#333"/>
<path d="M743 92h3v14h-3zM755 92h3v14h-3z" fill="#88b4e0"/><path d="M745 98l3 3 6-7" stroke="#3aa13a" stroke-width="2" fill="none"/>
<use href="#cam" x="776" y="90" width="16" height="16"/>
<rect x="810.500" y="92.500" width="13" height="13" fill="#eee" stroke="#555" stroke-dasharray="1 1"/><rect x="819" y="91" width="7" height="16" fill="#f0a83c" stroke="#a56a18" stroke-width=".7"/><rect x="813" y="98" width="6" height="4" fill="#7fa7c9"/>
<use href="#dd" x="832" y="97" width="7" height="3"/><use href="#x" x="850" y="92" width="14" height="14"/>
<path d="M194 145h14" stroke="#000" stroke-width="1.300"/><path d="M204 142l5 3-5 3z" fill="#000"/>
<rect x="487" y="139" width="1" height="16" fill="#ffa0a0"/>
<rect x="287.500" y="238.500" width="9" height="9" fill="none" stroke="#66669c"/><path d="M289.500 243h5" stroke="#334"/>
<path d="M312 284v360M312 291h14M312 307h14M312 323h14M312 339h14M312 355h14M312 403h14M312 419h14M312 435h14M312 451h14M312 483h14M312 515h14M312 547h14M312 563h14M312 579h14M312 595h14M312 611h14M312 627h14M312 643h14" stroke="#b8b8b8" fill="none"/>
<rect x="307.500" y="366.500" width="9" height="9" fill="#fff" stroke="#66669c"/><path d="M309.500 371h5M312 368.500v5" stroke="#334"/>
<rect x="287.500" y="686.500" width="9" height="9" fill="none" stroke="#66669c"/><path d="M289.500 691h5M292 688.500v5" stroke="#334"/>
<path d="M825.500 142l4 7h-8zM825.500 720l4-7h-8z" fill="#555"/>
<path d="M289 733l6-4v8zM815 733l-6-4v8z" fill="#555"/>
<path d="M331 118l7 8M338 118l-7 8" stroke="#fff" stroke-width="2"/>
<rect x="214" y="752" width="13" height="12" fill="#333"/><path d="M216 754h9M216 757h9M216 760h9" stroke="#cfe0ef" stroke-width="1.300"/>
<use href="#bin" x="413" y="751" width="15" height="15"/>

<!-- symbol tree icons -->
<use href="#orgt" x="7" y="313" width="16" height="16"/>
<path d="M122 328l3-6 7-9h3v5l-8 8v2z" fill="#999" stroke="#888"/><use href="#recv" x="143" y="313" width="16" height="16"/><use href="#x" x="168" y="314" width="14" height="14"/>
<use href="#tri" x="11" y="342" width="7" height="7"/><use href="#tri" x="11" y="360" width="7" height="7"/><use href="#tri" x="11" y="378" width="7" height="7"/><use href="#tri" x="11" y="396" width="7" height="7"/><use href="#tri" x="11" y="414" width="7" height="7"/><use href="#tri" x="11" y="432" width="7" height="7"/>
<use href="#folder" x="24" y="337" width="16" height="16"/><use href="#folder" x="24" y="355" width="16" height="16"/><use href="#folder" x="24" y="373" width="16" height="16"/><use href="#folder" x="24" y="391" width="16" height="16"/><use href="#folder" x="24" y="409" width="16" height="16"/><use href="#folder" x="24" y="427" width="16" height="16"/>
<path d="M43 342l4 7h-8z" fill="#197a4a"/>
<rect x="37" y="376" width="8" height="11" fill="#fff" stroke="#444"/><text x="39" y="385" font-family="Liberation Serif" font-style="italic" font-weight="bold" font-size="10" fill="#c41a1a">f</text>
<circle cx="41" cy="399" r="4" fill="#5cb04a"/>
<circle cx="40" cy="417" r="6" fill="#3fa040"/><text x="37" y="420" font-size="8" font-weight="bold" fill="#fff" font-family="DejaVu Sans">C</text>
<text x="38" y="439" font-size="11" font-weight="bold" fill="#111" font-family="DejaVu Sans Mono">{}</text>
<use href="#filt" x="166" y="495" width="16" height="16"/>

<!-- DTM icons -->
<use href="#folder" x="7" y="533" width="16" height="16"/><text x="10" y="545" font-size="6.500" font-weight="bold" fill="#222" font-family="DejaVu Sans">DT</text>
<use href="#dd" x="148" y="540" width="9" height="4"/><use href="#x" x="168" y="534" width="14" height="14"/>
<path d="M8 565l7-6v3h9v6h-9v3z" fill="#a2a2a2" stroke="#8a8a8a"/><use href="#ddg" x="31" y="564" width="6" height="3"/>
<path d="M60 565l-7-6v3h-9v6h9v3z" fill="#a2a2a2" stroke="#8a8a8a"/><use href="#ddg" x="67" y="564" width="6" height="3"/>
<circle cx="95" cy="561" r="2" fill="#1c4ad8"/><circle cx="105" cy="561" r="2" fill="#111"/><circle cx="105" cy="569" r="2" fill="#2cb83c"/><path d="M97 563v6h6" stroke="#f08a20" fill="none"/><use href="#dd" x="114" y="563" width="6" height="3"/>
<rect x="138.500" y="555.500" width="19" height="19" fill="#eef0f3" stroke="#666"/><rect x="160.500" y="555.500" width="19" height="19" fill="#eef0f3" stroke="#666"/>
<text x="144" y="570" font-family="DejaVu Sans Mono" font-size="11" font-weight="bold" fill="#222">N</text><path d="M163 562h6l5 3-4 5h-6z" fill="#f0901c" stroke="#5a3a0c"/><path d="M140 557l16 16M162 557l16 16" stroke="#c41010" stroke-width="2"/>
<path d="M19 583v-4h12v3" fill="none" stroke="#4a6d8c"/><rect x="16.500" y="581.500" width="14" height="14" fill="#f4f6fa" stroke="#4a6d8c"/><path d="M19 588.500h9" stroke="#4a6d8c" stroke-width="2"/>
<use href="#trid" x="11" y="610" width="8" height="8"/>
<path d="M24 619h24l-3 2h-3v2h-12v-2h-3z" fill="#8d3a12"/><rect x="28" y="609" width="4" height="10" fill="#d87a1c"/><rect x="36" y="608" width="4" height="11" fill="#2b63c0"/><rect x="40" y="608" width="4" height="11" fill="#2aa06a"/>
<use href="#tri" x="28" y="632" width="7" height="7"/><use href="#tri" x="28" y="653" width="7" height="7"/><use href="#tri" x="28" y="674" width="7" height="7"/>
<use href="#book" x="42" y="627" width="11" height="16" color="#e0801c"/><use href="#book" x="42" y="648" width="11" height="16" color="#f04a4a"/><use href="#book" x="42" y="669" width="11" height="16" color="#2ba56a"/>
<circle cx="60" cy="655" r="4" fill="#2e7fc8"/><path d="M58 655l1.500 1.500 3-3" stroke="#fff" fill="none"/>
<use href="#filt" x="165" y="744" width="16" height="16"/>

<!-- decompiler icons -->
<text x="877" y="104" font-family="DejaVu Sans" font-weight="bold" font-size="15" fill="#3a8cf5">C</text><text x="887" y="108" font-family="Liberation Serif" font-style="italic" font-weight="bold" font-size="11" fill="#e01cc0">f</text>
<path d="M1144 99a6 6 0 0 1 11-3l2-2v6h-6l2-2a4 4 0 0 0-7 2zM1157 101a6 6 0 0 1-11 3l-2 2v-6h6l-2 2a4 4 0 0 0 7-2z" fill="#8f8f8f"/>
<use href="#copy" x="1176" y="92" width="16" height="16"/>
<path d="M1211 92h11l3 3v12h-14z" fill="#8f8f8f"/><use href="#gcam" x="1244" y="91" width="16" height="16"/>
<use href="#dd" x="1271" y="98" width="10" height="4"/><use href="#x" x="1291" y="93" width="14" height="14"/>
<path d="M880 760l7-4v8zM1303 760l-7-4v8z" fill="#555"/>

<!-- status icon -->
<circle cx="12.500" cy="787" r="7.500" fill="#f4f4f4" stroke="#555"/><path d="M7 787l5-4h5l-2 2 1 5-2 1-1-3-3 3v-3z" fill="#cc1c1c"/>
</svg>

<!-- annotations -->
<div class="note" style="left:92px;top:163px"><span class="elf">ELF</span>文件各个节</div>
<div class="note" style="left:592px;top:226px">反汇编窗口</div>
<div class="note" style="left:100px;top:379px">导入表导出表</div>
<div class="note" style="left:100px;top:426px">函数等窗口</div>
<div class="note" style="left:936px;top:207px">可以叫伪代码窗口</div>
<div class="note" style="left:936px;top:254px">反汇编窗口和伪代码窗</div>
<div class="note" style="left:936px;top:301px">口是同步的</div>
</body></html>
